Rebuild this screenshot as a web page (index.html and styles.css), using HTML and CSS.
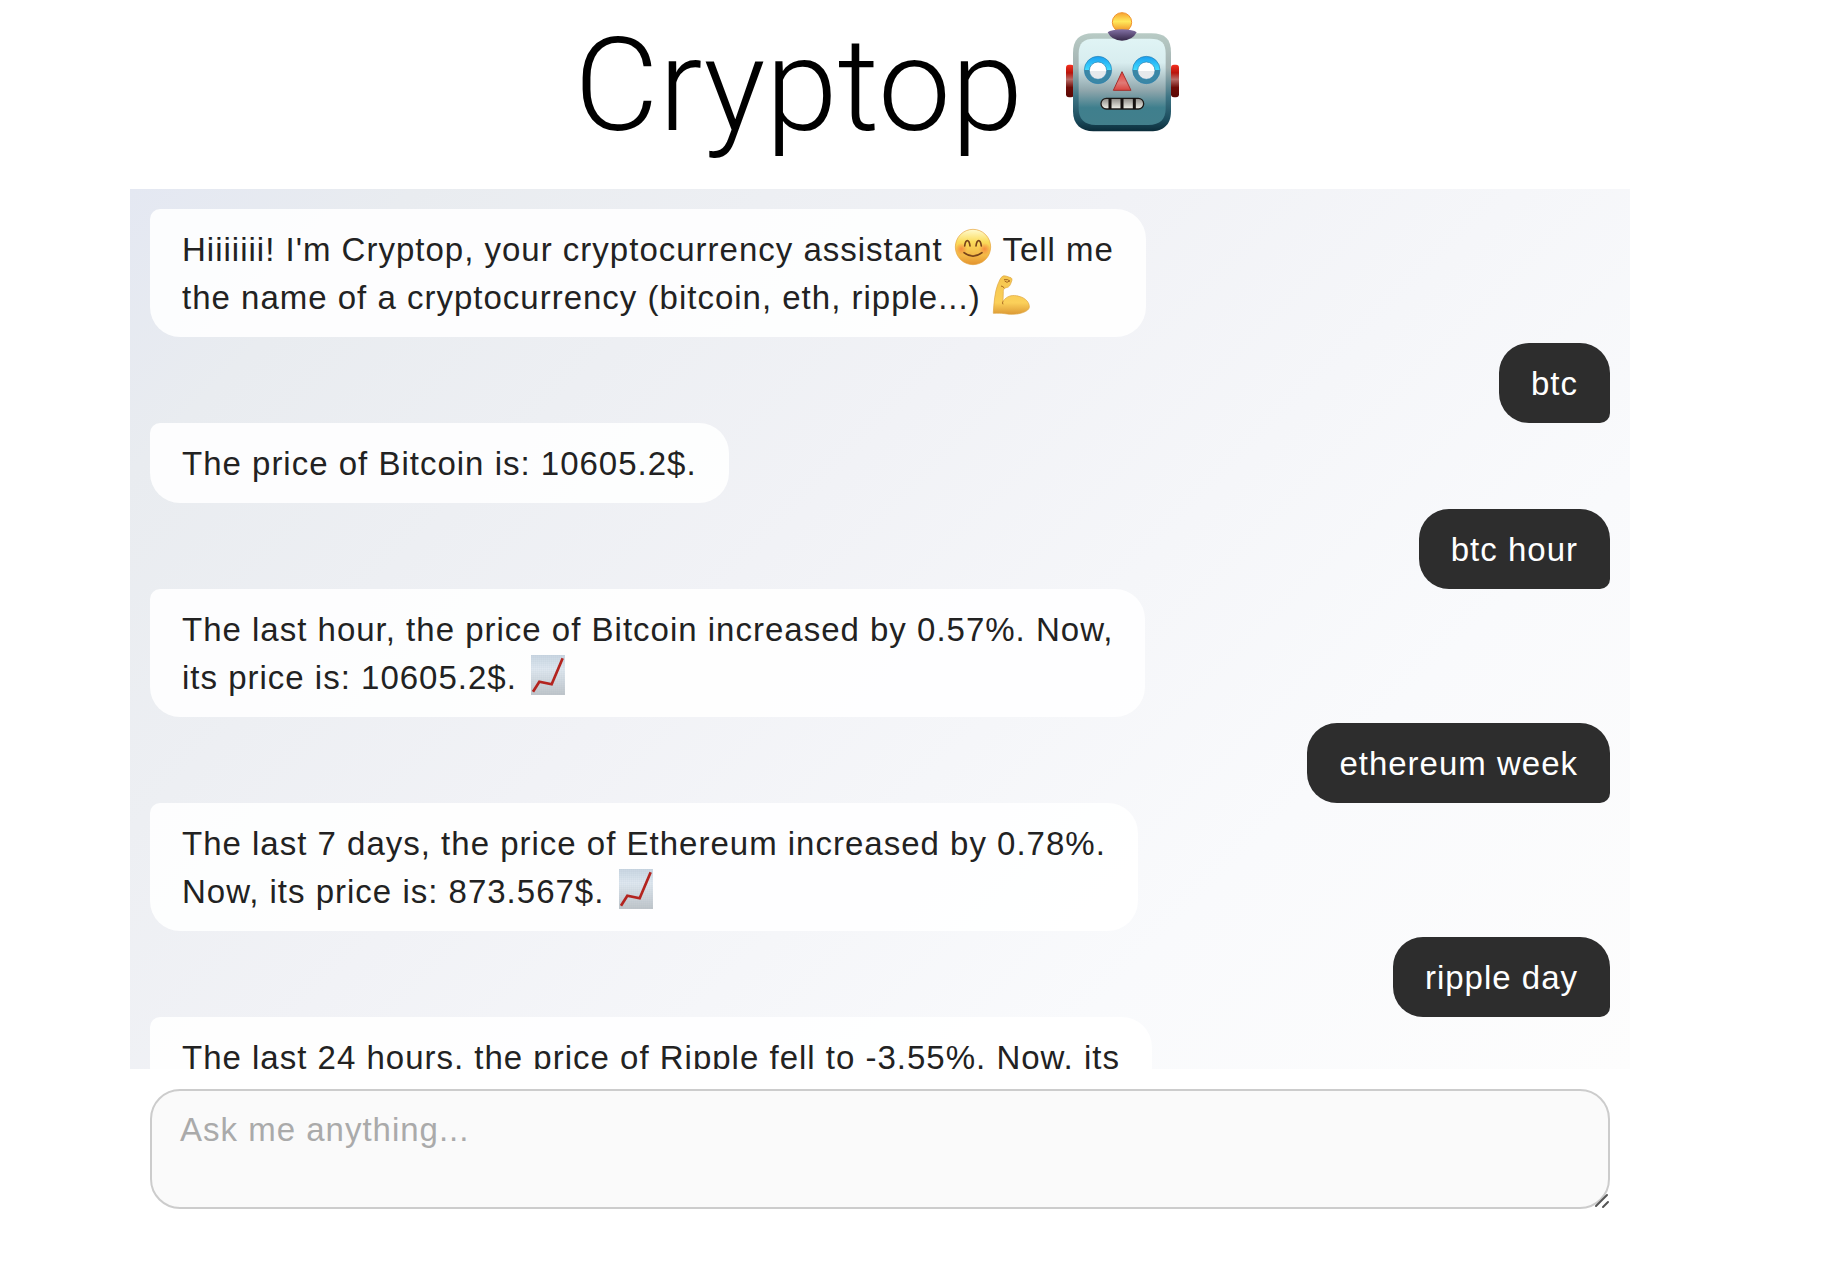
FILE: index.html
```html
<!DOCTYPE html>
<html lang="en">
<head>
<meta charset="utf-8">
<meta name="viewport" content="width=device-width, initial-scale=1">
<title>Cryptop</title>
<link rel="stylesheet" href="styles.css">
</head>
<body>
<svg class="defs" aria-hidden="true">
  <defs>
    <linearGradient id="chart-paper" x1="0" y1="0" x2="0" y2="1"><stop offset="0" stop-color="#c9d6e2"/><stop offset=".35" stop-color="#dfe8f0"/><stop offset="1" stop-color="#bfc5ca"/></linearGradient>
    <pattern id="chart-grid" width="6" height="6" patternUnits="userSpaceOnUse"><path d="M6 0H0V6" fill="none" stroke="#8fa3b5" stroke-opacity=".3"/></pattern>
    <symbol id="chart" viewBox="0 0 102 120">
      <path d="M0 0H102V120H0z" fill="url(#chart-paper)"/>
      <path d="M0 0H102V120H0z" fill="url(#chart-grid)"/>
      <path d="M6 110 25 80 62 88 95 10" fill="none" stroke="#b3241f" stroke-width="8"/>
    </symbol>
  </defs>
</svg>
<div class="page">
  <h1 class="title">Cryptop
    <svg class="robot" viewBox="42 36 345 366" role="img" aria-label="robot">
      <defs>
        <linearGradient id="rim" x1="0" y1="0" x2="0" y2="1"><stop offset="0" stop-color="#b8cbc5"/><stop offset=".35" stop-color="#a3b2b2"/><stop offset=".65" stop-color="#3d7484"/><stop offset=".88" stop-color="#1c4d5e"/><stop offset="1" stop-color="#0b2c3a"/></linearGradient>
        <linearGradient id="face" x1="0" y1="0" x2="0" y2="1"><stop offset="0" stop-color="#e0f4f5"/><stop offset=".28" stop-color="#d8edef"/><stop offset=".6" stop-color="#8fa6ac"/><stop offset=".8" stop-color="#3f7f8d"/><stop offset="1" stop-color="#427f8c"/></linearGradient>
        <linearGradient id="ear" x1="0" y1="0" x2="0" y2="1"><stop offset="0" stop-color="#f5301f"/><stop offset=".25" stop-color="#b9140c"/><stop offset=".45" stop-color="#b86b66"/><stop offset=".7" stop-color="#6e0b06"/><stop offset="1" stop-color="#5a0804"/></linearGradient>
        <linearGradient id="bulb" x1="0" y1="0" x2="0" y2="1"><stop offset="0" stop-color="#f7a12f"/><stop offset=".45" stop-color="#ffea5c"/><stop offset="1" stop-color="#f08a21"/></linearGradient>
        <linearGradient id="cap" x1="0" y1="0" x2="0" y2="1"><stop offset="0" stop-color="#8371a5"/><stop offset="1" stop-color="#362848"/></linearGradient>
        <linearGradient id="ring" x1="0" y1="0" x2="0" y2="1"><stop offset="0" stop-color="#1a9ff0"/><stop offset=".5" stop-color="#3fdcff"/><stop offset=".5" stop-color="#3b87a5"/></linearGradient>
        <linearGradient id="eye" x1="0" y1="0" x2="0" y2="1"><stop offset=".5" stop-color="#fff"/><stop offset=".5" stop-color="#e6e9ec"/></linearGradient>
        <linearGradient id="nose" x1="0" y1="0" x2="0" y2="1"><stop offset="0" stop-color="#ea3c35"/><stop offset=".6" stop-color="#e07a76"/><stop offset="1" stop-color="#d8433e"/></linearGradient>
        <linearGradient id="teeth" x1="0" y1="0" x2="0" y2="1"><stop offset="0" stop-color="#8d8b86"/><stop offset="1" stop-color="#f1f1ea"/></linearGradient>
      </defs>
      <rect x="45" y="197" width="24" height="98" rx="9" fill="url(#ear)"/>
      <rect x="360" y="197" width="24" height="98" rx="9" fill="url(#ear)"/>
      <path d="M126 103H301C343 103 360 121 360 161V337C360 380 334 397 300 397H127C92 397 66 378 66 337V162C66 122 86 103 126 103z" fill="url(#rim)"/>
      <path d="M130 119H297C331 119 344 132 344 164V328C344 361 328 378 292 378H135C99 378 83 360 83 328V164C83 132 98 119 130 119z" fill="url(#face)"/>
      <circle cx="213" cy="70" r="29" fill="url(#bulb)" stroke="#f0912a" stroke-width="3"/>
      <path d="M170 100Q180 92 213 91 247 92 257 100 244 125 213 125 182 125 170 100z" fill="url(#cap)"/>
      <g stroke="#2b7fae" stroke-width="2">
        <circle cx="141" cy="213" r="41" fill="url(#ring)"/><circle cx="286" cy="213" r="41" fill="url(#ring)"/>
        <circle cx="141" cy="215" r="26" fill="url(#eye)"/><circle cx="286" cy="215" r="26" fill="url(#eye)"/>
      </g>
      <path d="M213 218 240 274H187z" fill="url(#nose)" stroke="#a32f2d" stroke-width="3" stroke-linejoin="round"/>
      <rect x="150" y="298" width="128" height="32" rx="16" fill="url(#teeth)" stroke="#1d1a18" stroke-width="4"/>
      <path d="M177 298V330M213 298V330M250 298V330" stroke="#15110f" stroke-width="9"/>
    </svg>
  </h1>

  <main class="chat" role="log" aria-label="Conversation">
    <p class="bubble bot">Hiiiiiii! I'm Cryptop, your cryptocurrency assistant
      <svg class="emoji" viewBox="0 0 120 120" role="img" aria-label="smiling face">
        <defs>
          <linearGradient id="skin" x1="0" y1="0" x2="0" y2="1"><stop offset="0" stop-color="#fffbd0"/><stop offset=".35" stop-color="#fbdc5c"/><stop offset=".75" stop-color="#f3b746"/><stop offset="1" stop-color="#e3932e"/></linearGradient>
          <radialGradient id="blush"><stop offset="0" stop-color="#f5793a" stop-opacity=".75"/><stop offset="1" stop-color="#f5793a" stop-opacity="0"/></radialGradient>
        </defs>
        <circle cx="60" cy="60" r="53" fill="url(#skin)" stroke="#e5a23a" stroke-width="2"/>
        <circle cx="25" cy="66" r="18" fill="url(#blush)"/><circle cx="95" cy="66" r="18" fill="url(#blush)"/>
        <path d="M35 57Q37 41 43 41T51 57M69 57Q71 41 77 41T85 57M33 77Q60 98 87 77" fill="none" stroke="#78431a" stroke-width="5" stroke-linecap="round"/>
      </svg>
      Tell me<br>the name of a cryptocurrency (bitcoin, eth, ripple...)
      <svg class="emoji" viewBox="0 0 120 120" role="img" aria-label="flexed biceps">
        <defs>
          <linearGradient id="arm" x1="0" y1="0" x2="0" y2="1"><stop offset="0" stop-color="#f5c64f"/><stop offset=".7" stop-color="#fbd05a"/><stop offset="1" stop-color="#dd9a35"/></linearGradient>
        </defs>
        <path d="M7 112C9 83 11 53 20 29 25 19 27 8 36 3 43 1 49 5 56 7 63 8 65 13 61 21 58 30 55 37 46 38 38 39 37 45 37 50L36 79C47 62 66 58 84 64 105 69 116 84 115 97 113 110 86 118 64 118 46 118 35 113 7 115z" fill="url(#arm)" stroke="#dea540" stroke-width="2"/>
        <path d="M36 79Q33 84 36 88M30 33Q36 34 40 39M39 14H50L57 19M41 18 48 22 57 17" fill="none" stroke="#a86922" stroke-width="3"/>
      </svg>
    </p>
    <p class="bubble user">btc</p>
    <p class="bubble bot">The price of Bitcoin is: 10605.2$.</p>
    <p class="bubble user">btc hour</p>
    <p class="bubble bot">The last hour, the price of Bitcoin increased by 0.57%. Now,<br>its price is: 10605.2$. <svg class="emoji chart" role="img" aria-label="chart increasing"><use href="#chart"/></svg></p>
    <p class="bubble user">ethereum week</p>
    <p class="bubble bot">The last 7 days, the price of Ethereum increased by 0.78%.<br>Now, its price is: 873.567$. <svg class="emoji chart" role="img" aria-label="chart increasing"><use href="#chart"/></svg></p>
    <p class="bubble user">ripple day</p>
    <p class="bubble bot">The last 24 hours, the price of Ripple fell to -3.55%. Now, its</p>
  </main>

  <form class="composer">
    <textarea class="message" aria-label="Message" placeholder="Ask me anything..."></textarea>
    <svg class="grip" viewBox="0 0 16 16" aria-hidden="true"><path d="M2 13 13 2M9 14 14 9" fill="none" stroke="#555" stroke-width="2" stroke-linecap="round"/></svg>
  </form>
</div>
</body>
</html>
```
FILE: styles.css
```css
* {
  box-sizing: border-box;
}

body {
  margin: 0;
  padding-right: 66px;
  background: #fff;
  color: #222;
  font-family: "Liberation Sans", Arial, sans-serif;
  font-size: 33px;
  line-height: 48px;
}

.defs {
  position: absolute;
  width: 0;
  height: 0;
}

.page {
  display: flex;
  flex-direction: column;
  max-width: 1500px;
  height: 100vh;
  margin: 0 auto;
  padding-bottom: 55px;
}

.title {
  flex: none;
  margin: 0 0 17px;
  color: #000;
  font-family: Roboto, "Liberation Sans", sans-serif;
  font-size: 130px;
  font-weight: 300;
  line-height: 172px;
  text-align: center;
}

.robot {
  width: 115px;
  height: 122px;
  margin: 0 6px 0 10px;
  vertical-align: -3px;
}

.chat {
  display: flex;
  flex: 1;
  flex-direction: column;
  align-items: flex-start;
  min-height: 0;
  padding: 20px;
  overflow-y: auto;
  scrollbar-width: none;
  background: linear-gradient(135deg, #e4e8f2 0%, #e9ecf0 12%, #f1f2f6 42%, #f9fafc 75%, #fdfdfd 100%);
}

.bubble {
  flex: none;
  margin: 0;
  padding: 17px 32px 15px;
  letter-spacing: 1px;
}

.bot {
  margin-bottom: 6px;
  border-radius: 10px 30px 30px 30px;
  background: rgba(255, 255, 255, 0.88);
}

.user {
  align-self: flex-end;
  border-radius: 30px 30px 10px 30px;
  background: #2d2d2d;
  color: #fff;
}

.emoji {
  width: 40px;
  height: 40px;
  vertical-align: -6px;
}

.chart {
  width: 34px;
  margin: 0 4px;
}

.composer {
  position: relative;
  flex: none;
  padding: 20px;
}

.message {
  display: block;
  width: 100%;
  height: 120px;
  padding: 15px 28px 13px;
  resize: none;
  border: 2px solid #ccc;
  border-radius: 30px;
  outline: none;
  background: #fafafa;
  color: #222;
  font: inherit;
  letter-spacing: 1px;
}

.message::placeholder {
  color: #aaa;
  opacity: 1;
}

.grip {
  position: absolute;
  right: 20px;
  bottom: 20px;
  width: 16px;
  height: 16px;
}
```
